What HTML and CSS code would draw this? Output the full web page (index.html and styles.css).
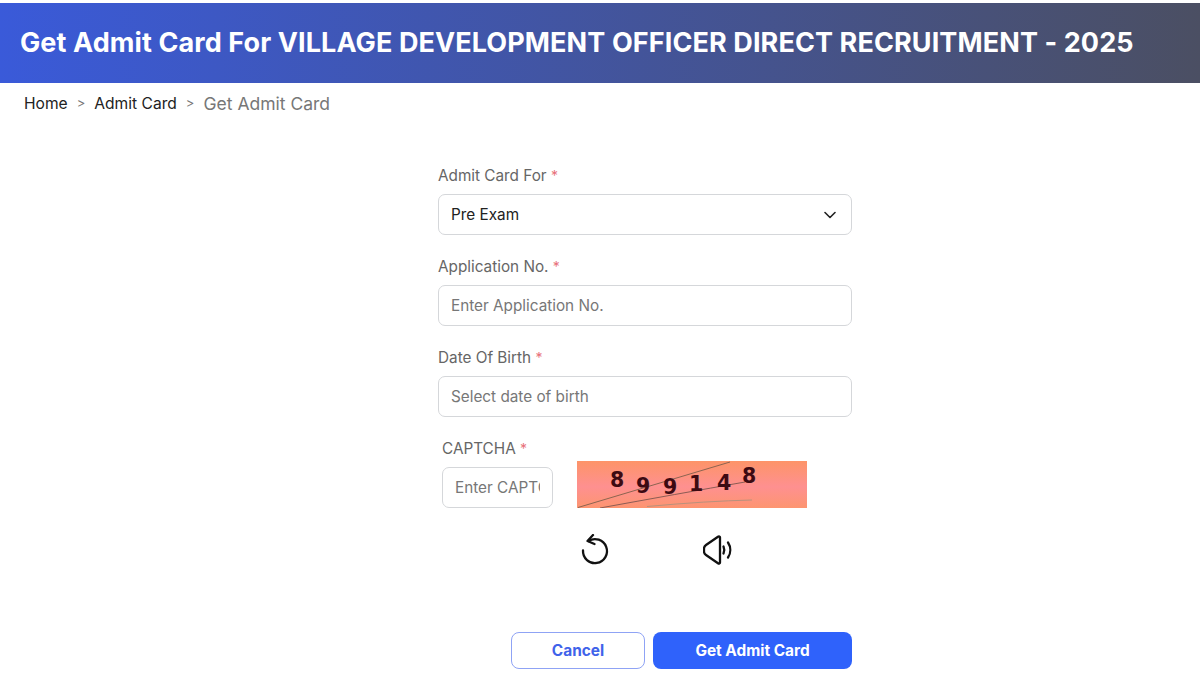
FILE: index.html
```html
<!DOCTYPE html>
<html lang="en">
<head>
    <meta charset="UTF-8">
    <meta name="viewport" content="width=device-width, initial-scale=1.0">
    <title>Get Admit Card</title>
    <link rel="stylesheet" href="styles.css">
</head>
<body>
    <header class="banner">
        <h1>Get Admit Card For VILLAGE DEVELOPMENT OFFICER DIRECT RECRUITMENT - 2025</h1>
    </header>

    <nav class="breadcrumb">
        <a href="#">Home</a>
        <span class="sep">&gt;</span>
        <a href="#">Admit Card</a>
        <span class="sep">&gt;</span>
        <span class="current">Get Admit Card</span>
    </nav>

    <form class="admit-form">
        <div class="field">
            <label>Admit Card For <span class="req">*</span></label>
            <div class="control select">
                <span>Pre Exam</span>
                <svg class="chevron" width="12" height="8" viewBox="0 0 12 8" fill="none" stroke="#222" stroke-width="1.6" stroke-linecap="round" stroke-linejoin="round"><path d="M1 1.5l5 5 5-5"/></svg>
            </div>
        </div>
        <div class="field">
            <label>Application No. <span class="req">*</span></label>
            <input class="control" type="text" placeholder="Enter Application No.">
        </div>
        <div class="field">
            <label>Date Of Birth <span class="req">*</span></label>
            <input class="control" type="text" placeholder="Select date of birth">
        </div>

        <div class="captcha">
            <label>CAPTCHA <span class="req">*</span></label>
            <div class="captcha-row">
                <input class="control captcha-input" type="text" placeholder="Enter CAPTCHA">
                <div class="captcha-side">
                    <svg class="captcha-img" width="230" height="47" viewBox="0 0 230 47">
                        <defs>
                            <linearGradient id="captchaBg" x1="0" y1="0" x2="0" y2="1">
                                <stop offset="0" stop-color="#fd9468"/>
                                <stop offset="0.55" stop-color="#fe9090"/>
                                <stop offset="1" stop-color="#fd9570"/>
                            </linearGradient>
                        </defs>
                        <rect width="230" height="47" fill="url(#captchaBg)"/>
                        <path d="M1 46.500L153 1" stroke="#8c6450" stroke-width="1" fill="none"/>
                        <path d="M23 47Q100 33 168 21" stroke="#8c5c54" stroke-width="1" fill="none"/>
                        <path d="M70 45.500Q130 40 175 39" stroke="#b9917c" stroke-width="1" fill="none"/>
                        <g class="digits">
                            <text x="33" y="26">8</text>
                            <text x="59" y="32">9</text>
                            <text x="86" y="33">9</text>
                            <text x="112" y="30">1</text>
                            <text x="140" y="29">4</text>
                            <text x="165" y="22">8</text>
                        </g>
                    </svg>
                    <div class="captcha-tools">
                        <svg width="30" height="32" viewBox="1 1.500 30 32" fill="none" stroke="#111" stroke-width="2.300" stroke-linecap="round" stroke-linejoin="round">
                            <path d="M8.500 8.500A12 12 0 1 1 3 18"/>
                            <path d="M13 2.500L7.500 8.500l7 3"/>
                        </svg>
                        <svg width="32" height="32" viewBox="0 0 32 32" fill="none" stroke="#111" stroke-width="2.300" stroke-linecap="round" stroke-linejoin="round">
                            <path d="M17 3.500c0-1-1-1.500-2-.8L3 11c-1.500 1-2 2-2 3.500v3c0 1.500.5 2.500 2 3.500l12 8.300c1 .7 2 .2 2-.8z"/>
                            <path d="M20.500 12.500c1 2.200 1 4.800 0 7"/>
                            <path d="M25 8.500c3 4.500 3 10.500 0 15"/>
                        </svg>
                    </div>
                </div>
            </div>
        </div>

        <div class="actions">
            <button class="btn btn-cancel" type="button">Cancel</button>
            <button class="btn btn-submit" type="button">Get Admit Card</button>
        </div>
    </form>
</body>
</html>
```

FILE: styles.css
```css
* {
    box-sizing: border-box;
}

html, body {
    height: 100%;
}

body {
    margin: 0;
    padding-top: 3px;
    overflow: hidden;
    background: #fff;
    font-family: Inter, "Noto Sans", Arial, sans-serif;
    color: #222;
}

.banner {
    height: 80px;
    padding-left: 20px;
    display: flex;
    align-items: center;
    background: linear-gradient(90deg, #3a5ad9 0%, #4b4f63 100%);
}

.banner h1 {
    margin: 0 0 1px;
    font-size: 27px;
    font-weight: 700;
    letter-spacing: 0.1px;
    white-space: nowrap;
    color: #fff;
}

.breadcrumb {
    height: 40px;
    padding-left: 24px;
    display: flex;
    align-items: center;
    font-size: 15.6px;
}

.breadcrumb a {
    color: #222;
    text-decoration: none;
}

.breadcrumb .sep {
    margin: 0 9px;
    font-size: 13px;
    color: #777;
}

.breadcrumb .current {
    font-size: 17.500px;
    color: #777;
}

.admit-form {
    width: 414px;
    margin: 43px 348px 0 auto;
}

.field {
    margin-bottom: 22px;
}

label {
    display: block;
    height: 20px;
    line-height: 20px;
    margin-bottom: 8px;
    font-size: 15.3px;
    color: #666;
}

.req {
    font-size: 14px;
    color: #e8707a;
}

.control {
    width: 100%;
    height: 41px;
    padding: 0 12px;
    border: 1px solid #d5d7da;
    border-radius: 7px;
    background: #fff;
    font: inherit;
    font-size: 15.3px;
    color: #222;
    outline: none;
}

.control::placeholder {
    color: #777;
    opacity: 1;
}

.select {
    display: flex;
    align-items: center;
    justify-content: space-between;
    padding-right: 15px;
}

.captcha {
    padding-left: 4px;
}

.captcha label {
    margin-bottom: 2px;
}

.captcha-row {
    display: flex;
    align-items: flex-start;
    gap: 24px;
}

.captcha-input {
    width: 111px;
    margin-top: 6px;
}

.captcha-img {
    display: block;
}

.digits text {
    font-family: "DejaVu Sans", sans-serif;
    font-size: 20.500px;
    font-weight: 700;
    fill: #3d0a12;
}

.captcha-tools {
    display: flex;
    justify-content: space-between;
    width: 154px;
    margin: 26px 0 0 4px;
}

.actions {
    display: flex;
    justify-content: flex-end;
    gap: 8px;
    margin-top: 66px;
}

.btn {
    height: 37px;
    border-radius: 8px;
    font-family: inherit;
    font-size: 15.400px;
    font-weight: 700;
}

.btn-cancel {
    width: 134px;
    border: 1px solid #8fa3f5;
    background: #fff;
    color: #3f63ea;
}

.btn-submit {
    width: 199px;
    border: 0;
    background: #2f62fb;
    color: #fff;
}
```
